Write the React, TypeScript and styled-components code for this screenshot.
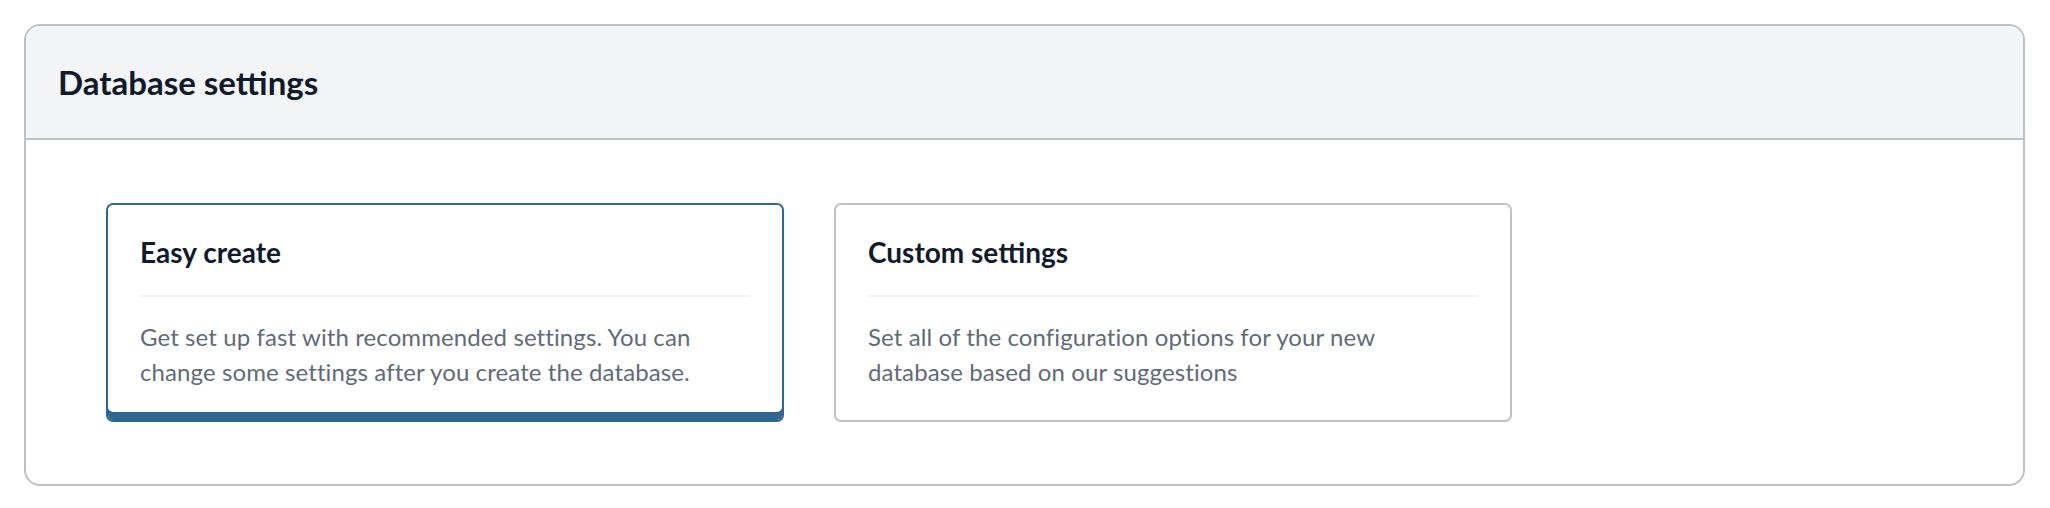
import React from 'react';
import styled, { createGlobalStyle } from 'styled-components';

type Option = {
    id: string;
    title: string;
    description: string;
};

const options: Option[] = [
    {
        id: 'easy',
        title: 'Easy create',
        description:
            'Get set up fast with recommended settings. You can change some settings after you create the database.',
    },
    {
        id: 'custom',
        title: 'Custom settings',
        description: 'Set all of the configuration options for your new database based on our suggestions',
    },
];

const GlobalStyle = createGlobalStyle`
    body {
        margin: 0;
        background: #ffffff;
        font-family: Lato, 'Noto Sans', sans-serif;
    }
`;

export default function App() {
    const selected = 'easy';

    return (
        <>
            <GlobalStyle />
            <Page>
                <Panel>
                    <PanelHeader>
                        <PanelTitle>Database settings</PanelTitle>
                    </PanelHeader>
                    <PanelBody>
                        {options.map((o) => (
                            <OptionCard key={o.id} $isSelected={o.id === selected}>
                                <CardTitle>{o.title}</CardTitle>
                                <CardDivider />
                                <CardText>{o.description}</CardText>
                            </OptionCard>
                        ))}
                    </PanelBody>
                </Panel>
            </Page>
        </>
    );
}

const Page = styled.div`
    padding: 24px 25px 23px 24px;
`;

const Panel = styled.section`
    border: 2px solid #bcc2c7;
    border-radius: 16px;
    overflow: hidden;
    background: #ffffff;
`;

const PanelHeader = styled.header`
    display: flex;
    align-items: center;
    height: 112px;
    padding: 0 32px;
    background: #f3f4f6;
    border-bottom: 2px solid #bcc2c7;
`;

const PanelTitle = styled.h2`
    margin: 0;
    font-size: 33px;
    font-weight: 700;
    color: #0f1b2d;
`;

const PanelBody = styled.div`
    display: flex;
    gap: 50px;
    padding: 63px 80px 62px;
`;

const OptionCard = styled.div<{ $isSelected: boolean }>`
    display: flex;
    flex-direction: column;
    width: 678px;
    height: 219px;
    box-sizing: border-box;
    padding: 30px 32px 0;
    border: 2px solid ${({ $isSelected }) => ($isSelected ? '#2e6891' : '#bcc2c7')};
    border-radius: 7px;
    box-shadow: ${({ $isSelected }) => ($isSelected ? 'inset 0 -8px 0 #2e6891' : 'none')};
    cursor: pointer;
`;

const CardTitle = styled.h3`
    margin: 0;
    font-size: 28px;
    font-weight: 700;
    line-height: 34px;
    color: #0f1b2d;
`;

const CardDivider = styled.hr`
    margin: 26px 0 0;
    border: none;
    border-top: 2px solid #f2f3f4;
`;

const CardText = styled.p`
    max-width: 600px;
    margin: 22px 0 0;
    font-size: 24px;
    letter-spacing: 0.1px;
    line-height: 35px;
    color: #5f6b7a;
`;
